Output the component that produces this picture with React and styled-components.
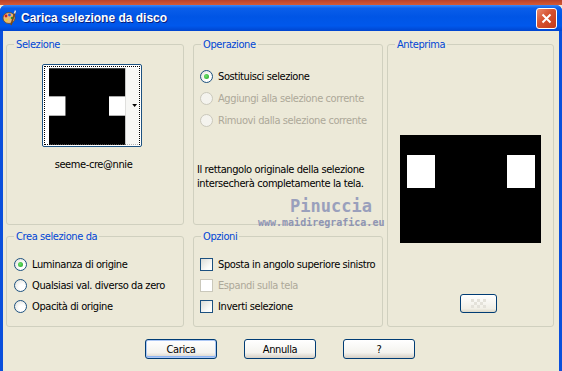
import styled, { createGlobalStyle } from "styled-components";

const Global = createGlobalStyle`
  html, body {
    margin: 0;
    padding: 0;
    background: #ece9d8;
  }
`;

const Screen = styled.div`
  position: relative;
  width: 562px;
  height: 371px;
  overflow: hidden;
  font-family: "DejaVu Sans Condensed", "DejaVu Sans", sans-serif;
  font-stretch: condensed;
  font-size: 11px;
  letter-spacing: -0.4px;
  color: #000;
`;

const Behind = styled.div`
  height: 5px;
  background: linear-gradient(#b9412a, #d65a34);
`;

const Window = styled.div`
  display: flex;
  flex-direction: column;
  height: 366px;
  background: #0a4fdc;
  padding: 0 3px;
  border-radius: 6px 6px 0 0;
`;

const TitleBar = styled.div`
  height: 26px;
  display: flex;
  align-items: center;
  margin: 0 -3px;
  padding: 0 5px 0 2px;
  border-radius: 6px 6px 0 0;
  background: linear-gradient(
    #3b8af7 0%,
    #0a5eea 12%,
    #0055e5 45%,
    #0058ec 80%,
    #0045cf 100%
  );
`;

const Title = styled.div`
  flex: 1;
  margin-left: 5px;
  font-family: "Liberation Sans", Arial, sans-serif;
  font-stretch: normal;
  font-weight: bold;
  font-size: 12px;
  letter-spacing: 0;
  color: #fff;
  text-shadow: 1px 1px 0 #0a1e7a;
`;

const CloseBox = styled.div`
  width: 19px;
  height: 19px;
  border: 1px solid #fff;
  border-radius: 3px;
  background: linear-gradient(135deg, #e98a6e 0%, #d6512f 45%, #c23a1a 100%);
  display: flex;
  align-items: center;
  justify-content: center;
`;

const Body = styled.div`
  flex: 1;
  background: #ece9d8;
  padding: 7px 0 0 3px;
  display: flex;
  flex-direction: column;
`;

const Grid = styled.div`
  display: grid;
  grid-template-columns: 187px 194px 167px;
  grid-template-rows: 192px 97px;
`;

const Group = styled.fieldset`
  margin: 0;
  padding: 0;
  min-width: 0;
  box-sizing: border-box;
  width: ${(p) => p.$w}px;
  height: ${(p) => p.$h}px;
  border: 1px solid #d0d0bf;
  border-radius: 3px;
  grid-row: ${(p) => p.$row || "auto"};
  display: flex;
  flex-direction: column;
`;

const Legend = styled.legend`
  margin-left: 7px;
  padding: 0 2px;
  color: #0046d5;
  line-height: 13px;
`;

const ThumbWrap = styled.div`
  display: flex;
  flex-direction: column;
  align-items: center;
  padding: 13px 0 0 0;
  margin-right: 7px;
`;

const Thumb = styled.div`
  width: 100px;
  height: 83px;
  box-sizing: border-box;
  border: 1px solid #1c5180;
  border-radius: 2px;
  background: #fff;
  padding: 1px;
`;

const Focus = styled.div`
  box-sizing: border-box;
  height: 100%;
  border: 1px dotted #000;
  padding: 0 0 0 4px;
  display: flex;
  align-items: flex-start;
`;

const ThumbName = styled.div`
  margin-top: 11px;
  margin-left: 4px;
`;

const Options = styled.div`
  display: flex;
  flex-direction: column;
  padding: ${(p) => p.$pad};
  gap: ${(p) => p.$gap}px;
`;

const Row = styled.label`
  display: flex;
  align-items: center;
  gap: 5px;
  height: 13px;
  white-space: nowrap;
  color: ${(p) => (p.$disabled ? "#aca899" : "#000")};
`;

const RadioDot = styled.span`
  flex: none;
  box-sizing: border-box;
  width: 13px;
  height: 13px;
  border-radius: 50%;
  border: 1px solid ${(p) => (p.$disabled ? "#cac8bb" : "#1c5180")};
  background: ${(p) =>
    p.$disabled
      ? "#f4f3ee"
      : "radial-gradient(circle at 65% 65%, #ffffff 30%, #dcdcd4 100%)"};
  display: flex;
  align-items: center;
  justify-content: center;
  &::after {
    content: "";
    width: 5px;
    height: 5px;
    border-radius: 50%;
    background: ${(p) =>
      p.$checked ? "radial-gradient(circle at 40% 40%, #6ee36e, #21a121)" : "transparent"};
  }
`;

const CheckBox = styled.span`
  flex: none;
  box-sizing: border-box;
  width: 13px;
  height: 13px;
  border: 1px solid ${(p) => (p.$disabled ? "#cac8bb" : "#1c5180")};
  background: ${(p) =>
    p.$disabled ? "#fff" : "linear-gradient(135deg, #dcdcd7 0%, #fbfbf9 70%, #fff 100%)"};
`;

const Note = styled.p`
  margin: 0;
  padding: 36px 0 0 3px;
  line-height: 14px;
`;

const PreviewArea = styled.div`
  display: flex;
  flex-direction: column;
  align-items: center;
  padding-top: 84px;
`;

const SmallButton = styled.div`
  box-sizing: border-box;
  width: 37px;
  height: 19px;
  margin-top: 51px;
  margin-left: 16px;
  border: 1px solid #003c74;
  border-radius: 3px;
  background: linear-gradient(#fff, #f1efe6 80%, #dcd8c8);
  display: flex;
  align-items: center;
  justify-content: center;
`;

const Buttons = styled.div`
  display: flex;
  gap: 27px;
  padding: 12px 0 0 139px;
`;

const Button = styled.button`
  box-sizing: border-box;
  width: 72px;
  height: 20px;
  padding: 0;
  font: inherit;
  font-size: 11px;
  letter-spacing: inherit;
  color: #000;
  border: 1px solid #003c74;
  border-radius: 3px;
  background: linear-gradient(#ffffff 0%, #f4f3ee 70%, #d6d0c5 100%);
  box-shadow: ${(p) =>
    p.$default ? "inset 0 0 0 1px #adc8f5, inset 0 -1px 0 1px #8cb4f2" : "none"};
`;

const Watermark = styled.div`
  position: absolute;
  left: 258px;
  top: 198px;
  width: 124px;
  text-align: center;
  color: #8f95b3;
  font-family: "DejaVu Sans Mono", monospace;
  font-stretch: normal;
  letter-spacing: 0;
  line-height: 1;
`;

const WmBig = styled.div`
  font-size: 17px;
  font-weight: bold;
  color: #9aa0bc;
  margin-left: 22px;
`;

const WmSmall = styled.div`
  font-size: 10px;
  margin-top: 3px;
  font-weight: bold;
`;

function AppIcon() {
  return (
    <svg width="14" height="16" viewBox="0 0 14 16">
      <ellipse cx="7" cy="8" rx="6" ry="5.5" fill="#e8b878" stroke="#6b4a20" strokeWidth="0.8" />
      <circle cx="4" cy="6" r="1.4" fill="#d42020" />
      <circle cx="7.5" cy="5" r="1.4" fill="#2a5ee0" />
      <circle cx="10" cy="8" r="1.3" fill="#2aa02a" />
      <circle cx="4.5" cy="10" r="1.2" fill="#f0d020" />
      <path d="M9 15 L13 2" stroke="#7a4a18" strokeWidth="1.6" />
      <path d="M12.4 3.5 L13.6 0.5" stroke="#ddd" strokeWidth="1.6" />
    </svg>
  );
}

function CloseIcon() {
  return (
    <svg width="11" height="11" viewBox="0 0 11 11">
      <path d="M1.5 1.5 L9.5 9.5 M9.5 1.5 L1.5 9.5" stroke="#fff" strokeWidth="2" />
    </svg>
  );
}

function ThumbImage() {
  return (
    <svg width="93" height="79" viewBox="0 0 93 79">
      <rect x="0" y="0" width="79" height="79" fill="#000" />
      <rect x="0" y="29" width="17" height="20" fill="#fff" />
      <rect x="62" y="29" width="17" height="20" fill="#fff" />
      <rect x="79" y="0" width="14" height="79" fill="#f7f7f5" />
      <path d="M86 37 L91 37 L88.5 40 Z" fill="#000" />
    </svg>
  );
}

function PreviewImage() {
  return (
    <svg width="141" height="108" viewBox="0 0 141 108">
      <rect width="141" height="108" fill="#000" />
      <rect x="7" y="20" width="28" height="33" fill="#fff" />
      <rect x="107" y="20" width="28" height="33" fill="#fff" />
    </svg>
  );
}

function Checker() {
  const cells = [];
  for (let r = 0; r < 3; r++)
    for (let c = 0; c < 5; c++)
      if ((r + c) % 2 === 0)
        cells.push(<rect key={r + "-" + c} x={c * 3} y={r * 3} width="3" height="3" fill="#e4e2da" />);
  return (
    <svg width="15" height="9" viewBox="0 0 15 9">
      {cells}
    </svg>
  );
}

function Radio({ label, checked, disabled }) {
  return (
    <Row $disabled={disabled}>
      <RadioDot $checked={checked} $disabled={disabled} />
      {label}
    </Row>
  );
}

function Check({ label, disabled }) {
  return (
    <Row $disabled={disabled}>
      <CheckBox $disabled={disabled} />
      {label}
    </Row>
  );
}

export default function App() {
  return (
    <Screen>
      <Global />
      <Behind />
      <Window>
        <TitleBar>
          <AppIcon />
          <Title>Carica selezione da disco</Title>
          <CloseBox>
            <CloseIcon />
          </CloseBox>
        </TitleBar>
        <Body>
          <Grid>
            <Group $w={178} $h={187}>
              <Legend>Selezione</Legend>
              <ThumbWrap>
                <Thumb>
                  <Focus>
                    <ThumbImage />
                  </Focus>
                </Thumb>
                <ThumbName>seeme-cre@nnie</ThumbName>
              </ThumbWrap>
            </Group>
            <Group $w={190} $h={187}>
              <Legend>Operazione</Legend>
              <Options $pad="19px 0 0 6px" $gap={9}>
                <Radio label="Sostituisci selezione" checked />
                <Radio label="Aggiungi alla selezione corrente" disabled />
                <Radio label="Rimuovi dalla selezione corrente" disabled />
              </Options>
              <Note>
                Il rettangolo originale della selezione
                <br />
                intersecherà completamente la tela.
              </Note>
            </Group>
            <Group $w={167} $h={289} $row="span 2">
              <Legend>Anteprima</Legend>
              <PreviewArea>
                <PreviewImage />
                <SmallButton>
                  <Checker />
                </SmallButton>
              </PreviewArea>
            </Group>
            <Group $w={178} $h={97}>
              <Legend>Crea selezione da</Legend>
              <Options $pad="15px 0 0 7px" $gap={8}>
                <Radio label="Luminanza di origine" checked />
                <Radio label="Qualsiasi val. diverso da zero" />
                <Radio label="Opacità di origine" />
              </Options>
            </Group>
            <Group $w={190} $h={97}>
              <Legend>Opzioni</Legend>
              <Options $pad="15px 0 0 6px" $gap={8}>
                <Check label="Sposta in angolo superiore sinistro" />
                <Check label="Espandi sulla tela" disabled />
                <Check label="Inverti selezione" />
              </Options>
            </Group>
          </Grid>
          <Buttons>
            <Button $default>Carica</Button>
            <Button>Annulla</Button>
            <Button>?</Button>
          </Buttons>
        </Body>
      </Window>
      <Watermark>
        <WmBig>Pinuccia</WmBig>
        <WmSmall>www.maidiregrafica.eu</WmSmall>
      </Watermark>
    </Screen>
  );
}
